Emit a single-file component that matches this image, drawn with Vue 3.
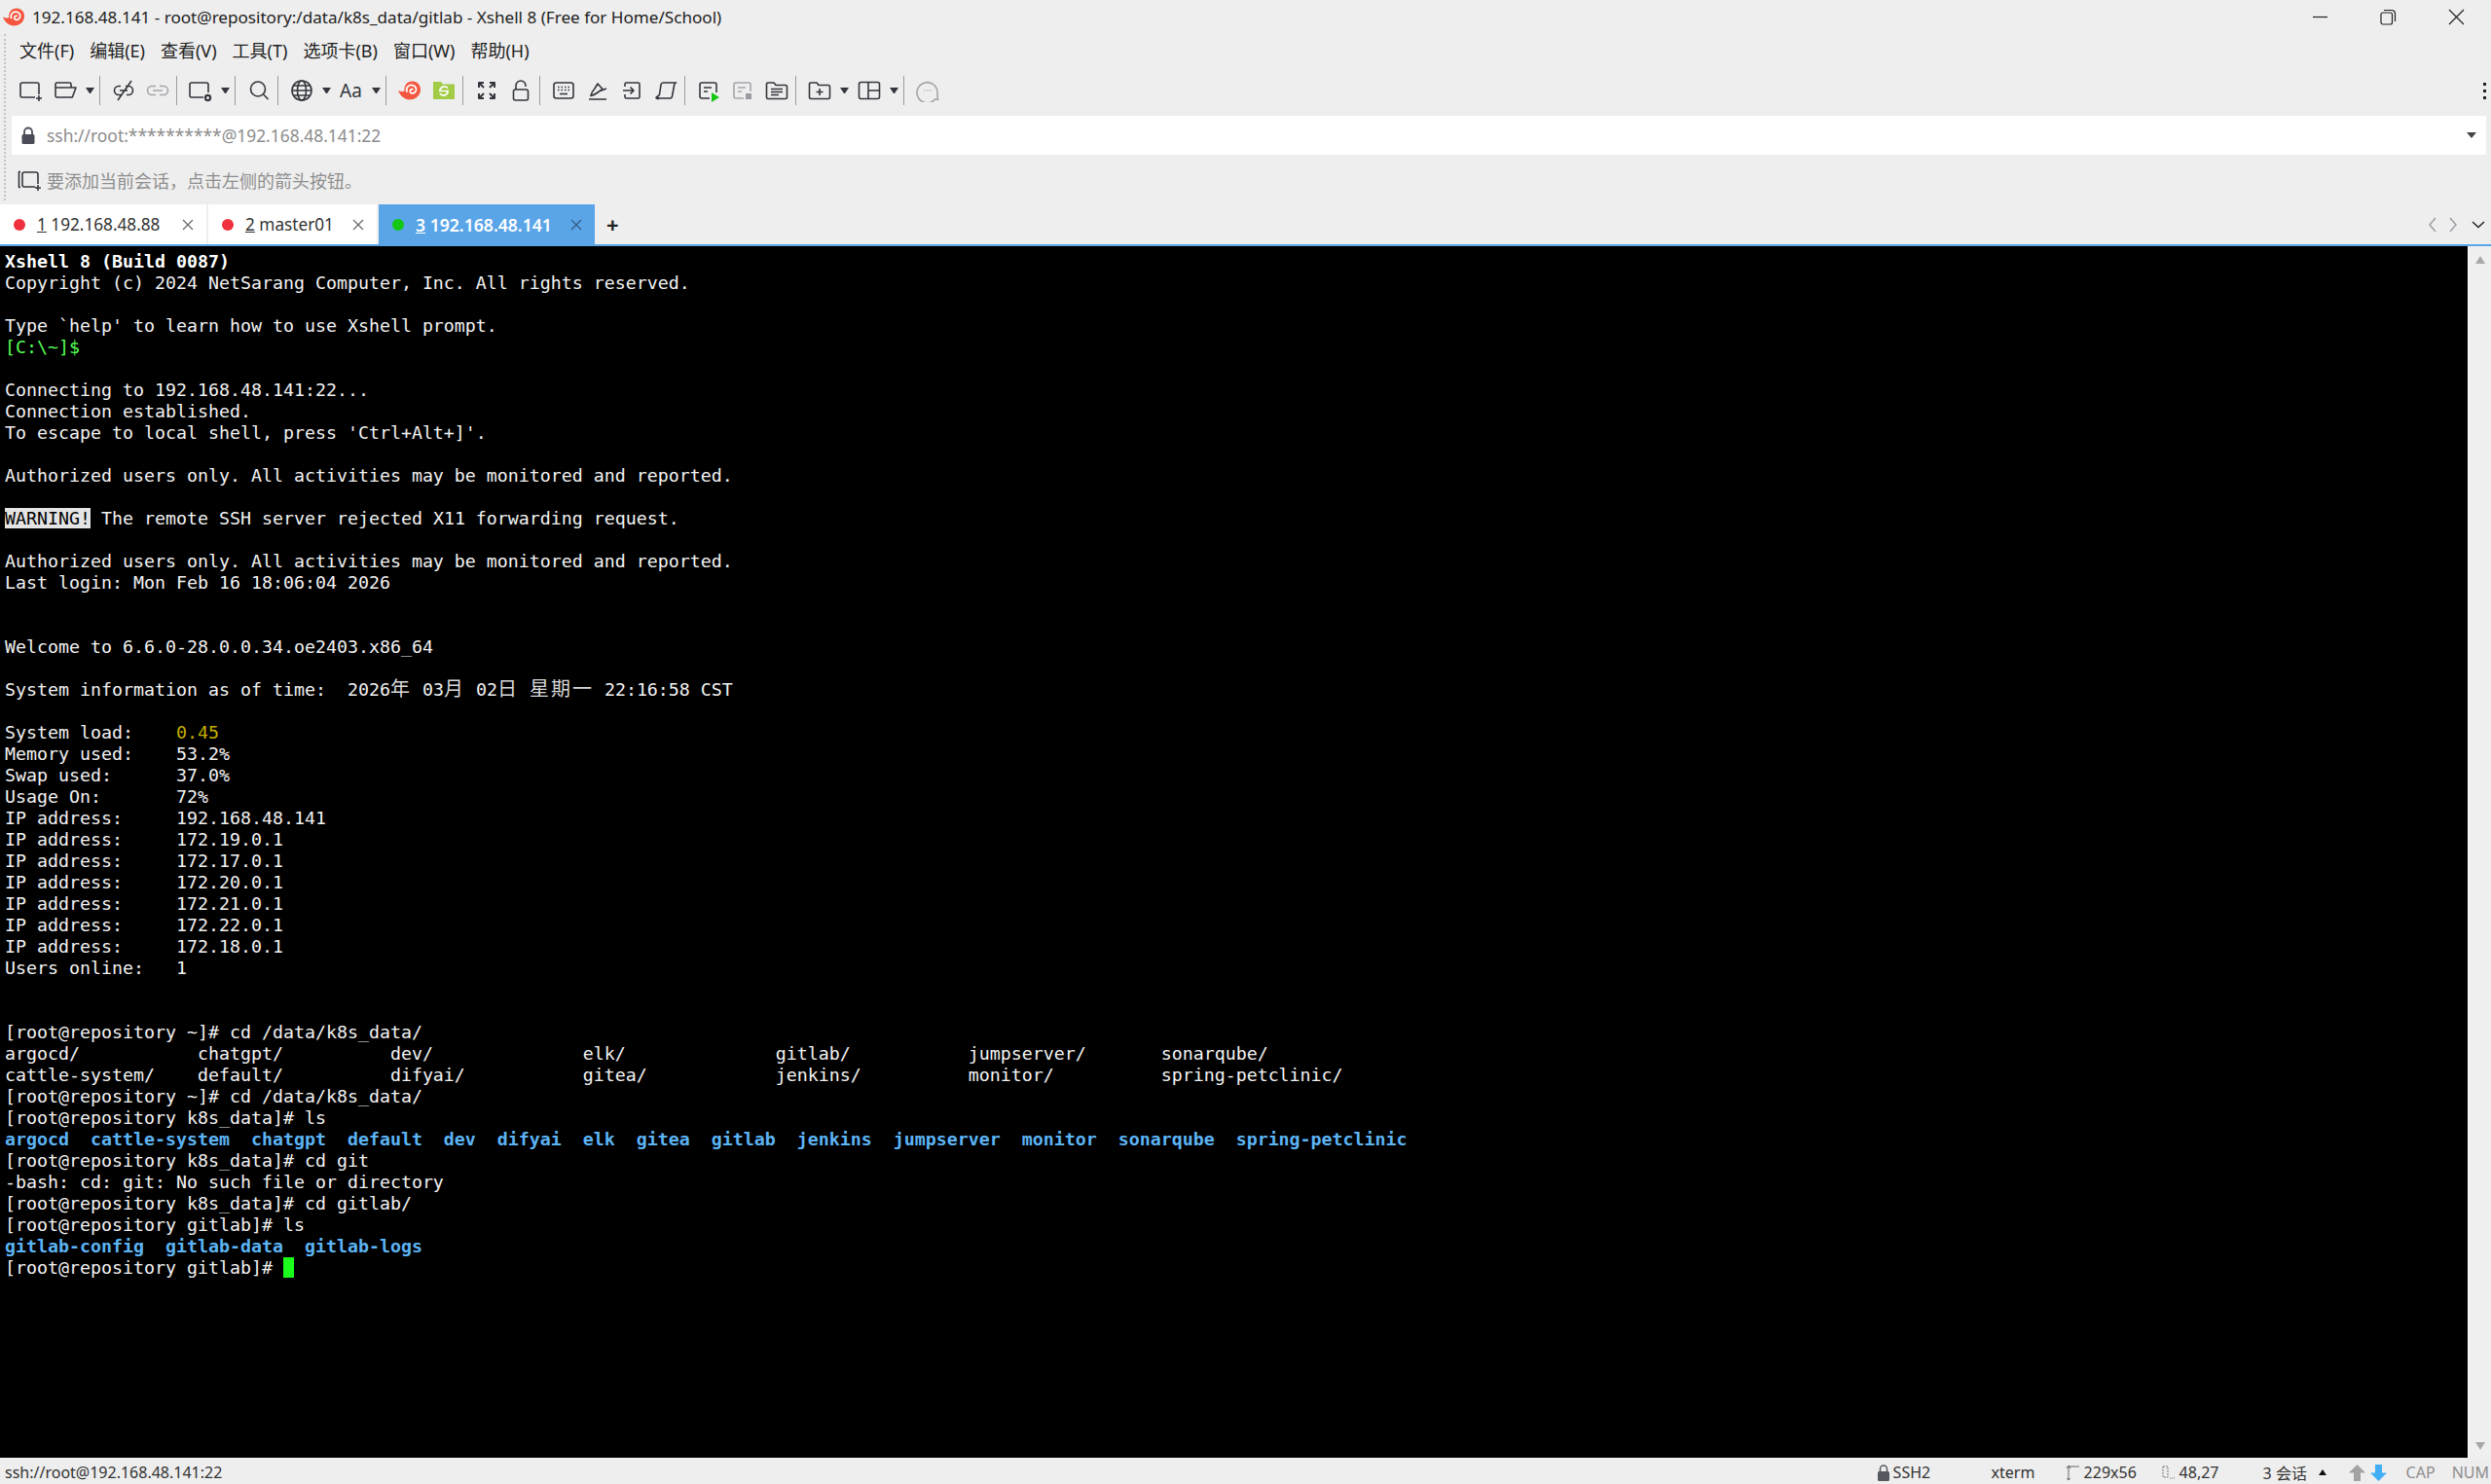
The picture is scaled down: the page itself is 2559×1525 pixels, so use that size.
<template>
  <div class="window">
    <!-- shared glyphs -->
    <svg class="defs" width="0" height="0">
      <symbol id="snail" viewBox="0 0 24 24">
        <path d="M1 11.5c2.5 1.2 4.6 1.3 6.2.4C6.6 6.5 10 2.5 15 2.5c5 0 8 3.8 8 8 0 5.8-4.800 10-10.800 10C7.300 20.500 3 16.800 1 11.500z" fill="#f4573f" />
        <path d="M9.500 12.500c-1-4 2-7.200 5.800-6.200 3 .8 4.200 3.700 3 6-1.200 2.200-4.300 2.800-5.300 1-.8-1.500.4-3.300 2.200-3" fill="none" stroke="#fff" stroke-width="1.700" stroke-linecap="round" />
      </symbol>
    </svg>

    <div class="gripper"></div>

    <header class="titlebar">
      <svg class="logo" width="24" height="24"><use href="#snail" /></svg>
      <span class="title">192.168.48.141 - root@repository:/data/k8s_data/gitlab - Xshell 8 (Free for Home/School)</span>
      <div class="win-controls">
        <svg width="17" height="17" viewBox="0 0 17 17"><path d="M1 8.500h15" stroke="#222" stroke-width="1.200" /></svg>
        <svg width="17" height="17" viewBox="0 0 17 17" fill="none" stroke="#222" stroke-width="1.200"><rect x="1" y="4" width="11.500" height="12" rx="2" /><path d="M4 1.500h8a3.500 3.500 0 0 1 3.500 3.500v8" /></svg>
        <svg width="17" height="17" viewBox="0 0 17 17"><path d="M1 1l15 15M16 1L1 16" stroke="#222" stroke-width="1.200" /></svg>
      </div>
    </header>

    <nav class="menubar">
      <span v-for="m in menus" :key="m" class="menu-item">{{ m }}</span>
    </nav>

    <div class="toolbar">
      <span class="slot"><svg class="ic" viewBox="0 0 24 24"><path d="M16 19H3a2 2 0 0 1-2-2V6a2 2 0 0 1 2-2h15a2 2 0 0 1 2 2v10" /><path d="M20 17v6M17 20h6" /></svg></span>
      <span class="slot"><svg class="ic" viewBox="0 0 24 24"><path d="M2 9h21l-3.500 9.500a1 1 0 0 1-1 .5H3.500A1.500 1.500 0 0 1 2 17.500v-12A1.500 1.500 0 0 1 3.500 4h13A1.500 1.500 0 0 1 18 5.500V9" /></svg></span>
      <span class="caret"></span>
      <span class="sep"></span>
      <span class="slot"><svg class="ic" viewBox="0 0 24 24"><path d="M9 7.500H7a4.500 4.500 0 0 0 0 9h3M14 7.500h3a4.500 4.500 0 0 1 0 9h-2M8 12h8M20 2L6 22" /></svg></span>
      <span class="slot"><svg class="ic muted" viewBox="0 0 24 24"><path d="M10 7.500H6a4.500 4.500 0 0 0 0 9h4M14 7.500h4a4.500 4.500 0 0 1 0 9h-4M7 12h10" /></svg></span>
      <span class="sep"></span>
      <span class="slot"><svg class="ic" viewBox="0 0 24 24"><path d="M15 19H3a2 2 0 0 1-2-2V6a2 2 0 0 1 2-2h15a2 2 0 0 1 2 2v8" /><circle cx="19.500" cy="19.500" r="2.600" stroke-width="2.200" /></svg></span>
      <span class="caret"></span>
      <span class="sep"></span>
      <span class="slot"><svg class="ic" viewBox="0 0 24 24"><circle cx="11" cy="10.500" r="7.500" /><path d="M16.500 16l5 5" /></svg></span>
      <span class="sep"></span>
      <span class="slot"><svg class="ic" viewBox="0 0 24 24"><circle cx="12" cy="12" r="10" /><ellipse cx="12" cy="12" rx="4.500" ry="10" /><path d="M2 12h20M3.500 7h17M3.500 17h17" /></svg></span>
      <span class="caret"></span>
      <span class="slot aa">Aa</span>
      <span class="caret"></span>
      <span class="sep"></span>
      <span class="slot"><svg width="25" height="25"><use href="#snail" /></svg></span>
      <span class="slot">
        <svg width="24" height="24" viewBox="0 0 24 24">
          <path d="M1 3h8l2 2.500h12V21H1z" fill="#a2cc45" />
          <path d="M8 12a4.500 4.500 0 0 1 8-2.300M16 13a4.500 4.500 0 0 1-8 2.300" fill="none" stroke="#fff" stroke-width="1.800" />
          <path d="M7 12.500h10" stroke="#fff" stroke-width="1.500" />
        </svg>
      </span>
      <span class="sep"></span>
      <span class="slot"><svg class="ic thick" viewBox="0 0 24 24"><path d="M4 9V4h5M4 4l5 5M20 9V4h-5M20 4l-5 5M4 15v5h5M4 20l5-5M20 15v5h-5M20 20l-5-5" /></svg></span>
      <span class="slot"><svg class="ic" viewBox="0 0 24 24"><rect x="4.500" y="11" width="15" height="11" rx="2" /><path d="M7 11V7a5 5 0 0 1 10 0v1" /></svg></span>
      <span class="sep"></span>
      <span class="slot"><svg class="ic" viewBox="0 0 24 24"><rect x="2" y="4" width="20" height="16" rx="2.500" /><path d="M6 8.500h1.500M9.500 8.500H11M13 8.500h1.500M16.500 8.500H18M6 11.500h1.500M9.500 11.500H11M13 11.500h1.500M16.500 11.500H18M8 15.500h8" /></svg></span>
      <span class="slot"><svg class="ic" viewBox="0 0 24 24"><path d="M3 21h18M5 17.500c.5-3 2-5.500 4-7.500l3-5 5 5.500-5 3.500c-2 1.500-4.500 3-7 3.500zM13 13l8-3" /></svg></span>
      <span class="slot"><svg class="ic" viewBox="0 0 24 24"><path d="M5 8V5.500A1.500 1.500 0 0 1 6.500 4h12A1.500 1.500 0 0 1 20 5.500v13a1.500 1.500 0 0 1-1.500 1.500h-12A1.500 1.500 0 0 1 5 18.500V16M3 12h11M10.500 8.500L14 12l-3.500 3.500" /></svg></span>
      <span class="slot"><svg class="ic" viewBox="0 0 24 24"><path d="M2 19.500c2-.5 3 .3 3.500.5l11 0c1 0 1.700-.7 2-2l2.200-12c.2-1 1-2 2-2H9c-1 0-1.700 1-2 2L5.500 16C5 18 2.500 18 2 19.500zM2 19.500c0 .5 1 1 3 1" /></svg></span>
      <span class="sep"></span>
      <span class="slot">
        <svg class="ic" viewBox="0 0 24 24"><path d="M13 20H5a2 2 0 0 1-2-2V6a2 2 0 0 1 2-2h13a2 2 0 0 1 2 2v8M7 9h8M7 13h4" /><path d="M15 14l8 5-8 5z" class="play" /></svg>
      </span>
      <span class="slot">
        <svg class="ic muted" viewBox="0 0 24 24"><path d="M13 20H5a2 2 0 0 1-2-2V6a2 2 0 0 1 2-2h13a2 2 0 0 1 2 2v7M7 9h8M7 13h4" /><rect x="15" y="15" width="6" height="6" class="stop" /></svg>
      </span>
      <span class="slot"><svg class="ic" viewBox="0 0 24 24"><path d="M1.500 5.500A1.500 1.500 0 0 1 3 4h6l2 2.500h10A1.500 1.500 0 0 1 22.500 8v11a1.500 1.500 0 0 1-1.500 1.500H3A1.500 1.500 0 0 1 1.500 19zM6 10.500h12M6 13.500h12M6 16.500h8" /></svg></span>
      <span class="sep"></span>
      <span class="slot"><svg class="ic" viewBox="0 0 24 24"><path d="M1.500 5.500A1.500 1.500 0 0 1 3 4h6l2 2.500h10A1.500 1.500 0 0 1 22.500 8v11a1.500 1.500 0 0 1-1.500 1.500H3A1.500 1.500 0 0 1 1.500 19zM12 10v7M8.500 13.500h7" /></svg></span>
      <span class="caret"></span>
      <span class="slot"><svg class="ic" viewBox="0 0 24 24"><rect x="1.500" y="3.500" width="21" height="17" rx="2" /><path d="M11 3.500v17M11 12h11.500" /></svg></span>
      <span class="caret"></span>
      <span class="sep"></span>
      <span class="slot"><svg class="ic muted" viewBox="0 0 24 24"><path d="M22.500 21.500l-3-.5A10.500 10.500 0 1 1 22 14c0 2 0 5 .5 7.500z" /><path d="M8.500 12h1M11.500 12h1M14.500 12h1" /></svg></span>
      <div class="more"><i></i><i></i><i></i></div>
    </div>

    <div class="addressbar">
      <svg class="addr-lock" width="14" height="18" viewBox="0 0 14 18">
        <path d="M3 9V5.500a4 4 0 0 1 8 0V9" fill="none" stroke="#4a4d55" stroke-width="1.800" />
        <rect x="0.500" y="8" width="13" height="10" rx="1.500" fill="#4a4d55" />
      </svg>
      <span class="addr-text">ssh://root:**********@192.168.48.141:22</span>
      <span class="addr-caret"></span>
    </div>

    <div class="hintbar">
      <svg class="ic hint-ic" viewBox="0 0 24 24"><path d="M3 3.500H1.500v16H3M18 19H7a2 2 0 0 1-2-2V6a2 2 0 0 1 2-2h12a2 2 0 0 1 2 2v10" /><path d="M21 17v6M18 20h6" /></svg>
      <span>要添加当前会话，点击左侧的箭头按钮。</span>
    </div>

    <div class="tabbar">
      <div v-for="tab in tabs" :key="tab.num" class="tab" :class="{ active: tab.active }" :style="{ width: tab.width + 'px' }">
        <span class="dot" :class="{ green: tab.active }"></span>
        <span class="tab-label"><u>{{ tab.num }}</u> {{ tab.label }}</span>
        <svg class="tab-close" width="12" height="12" viewBox="0 0 12 12"><path d="M1 1l10 10M11 1L1 11" /></svg>
      </div>
      <span class="tab-add">+</span>
      <div class="tab-nav">
        <svg width="10" height="16" viewBox="0 0 10 16"><path d="M8 1L2 8l6 7" stroke="#9a9aa2" /></svg>
        <svg width="10" height="16" viewBox="0 0 10 16"><path d="M2 1l6 7-6 7" stroke="#9a9aa2" /></svg>
        <svg class="tab-more" width="14" height="10" viewBox="0 0 14 10"><path d="M1 2l6 5.500L13 2" stroke="#222" /></svg>
      </div>
    </div>

    <main class="terminal-wrap">
      <div class="terminal">
        <div v-for="(row, i) in rows" :key="i" class="row">
          <span v-for="(seg, j) in row" :key="j" :class="seg.c">{{ seg.t }}</span>
        </div>
      </div>
      <div class="scrollbar">
        <span class="arrow-up"></span>
        <span class="arrow-down"></span>
      </div>
    </main>

    <footer class="statusbar">
      <span class="st-url">ssh://root@192.168.48.141:22</span>
      <span class="st-cell st-ssh">
        <svg width="12" height="17" viewBox="0 0 12 17"><path d="M2.500 8V4.500a3.500 3.500 0 0 1 7 0V8" fill="none" stroke="#55585f" stroke-width="1.500" /><rect y="7" width="12" height="10" rx="1.500" fill="#55585f" /></svg>
        SSH2
      </span>
      <span class="st-cell st-term">xterm</span>
      <span class="st-cell st-size">
        <svg width="15" height="18" viewBox="0 0 15 18" fill="none" stroke="#666"><path d="M3 3v14M3 3h11M1 5l2-3 2 3M1 15l2 2 2-2" /></svg>
        229x56
      </span>
      <span class="st-cell st-pos">
        <svg width="15" height="16" viewBox="0 0 15 16" fill="none" stroke="#777"><rect x="2" y="2" width="5" height="11" stroke-dasharray="2 1" /><path d="M9 14h5" stroke-dasharray="1 1" /></svg>
        48,27
      </span>
      <span class="st-cell st-sess">3 会话</span>
      <span class="st-up"></span>
      <svg class="st-arrow" width="17" height="17" viewBox="0 0 17 17"><path d="M8.500 0L17 8.500h-5V17H5V8.500H0z" fill="#a3a3a3" /></svg>
      <svg class="st-arrow" width="17" height="17" viewBox="0 0 17 17"><path d="M8.500 17L0 8.500h5V0h7v8.500h5z" fill="#42aef5" /></svg>
      <span class="st-cell st-key st-cap">CAP</span>
      <span class="st-cell st-key">NUM</span>
    </footer>
  </div>
</template>

<script setup>
const menus = ['文件(F)', '编辑(E)', '查看(V)', '工具(T)', '选项卡(B)', '窗口(W)', '帮助(H)']

const tabs = [
  { num: 1, label: '192.168.48.88', width: 212 },
  { num: 2, label: 'master01', width: 173 },
  { num: 3, label: '192.168.48.141', width: 222, active: true },
]

// plain strings are one white segment, everything else is [text, class] pairs
const raw = [
  [['Xshell 8 (Build 0087)', 'bold']],
  'Copyright (c) 2024 NetSarang Computer, Inc. All rights reserved.',
  '',
  "Type `help' to learn how to use Xshell prompt.",
  [['[C:\\~]$', 'green']],
  '',
  'Connecting to 192.168.48.141:22...',
  'Connection established.',
  "To escape to local shell, press 'Ctrl+Alt+]'.",
  '',
  'Authorized users only. All activities may be monitored and reported.',
  '',
  [['WARNING!', 'warn'], [' The remote SSH server rejected X11 forwarding request.', '']],
  '',
  'Authorized users only. All activities may be monitored and reported.',
  'Last login: Mon Feb 16 18:06:04 2026',
  '',
  '',
  'Welcome to 6.6.0-28.0.0.34.oe2403.x86_64',
  '',
  [
    ['System information as of time:  2026', ''],
    ['年', 'wide'],
    [' 03', ''],
    ['月', 'wide'],
    [' 02', ''],
    ['日', 'wide'],
    [' ', ''],
    ['星期一', 'wide'],
    [' 22:16:58 CST', ''],
  ],
  '',
  [['System load:    ', ''], ['0.45', 'yellow']],
  'Memory used:    53.2%',
  'Swap used:      37.0%',
  'Usage On:       72%',
  'IP address:     192.168.48.141',
  'IP address:     172.19.0.1',
  'IP address:     172.17.0.1',
  'IP address:     172.20.0.1',
  'IP address:     172.21.0.1',
  'IP address:     172.22.0.1',
  'IP address:     172.18.0.1',
  'Users online:   1',
  '',
  '',
  '[root@repository ~]# cd /data/k8s_data/',
  'argocd/           chatgpt/          dev/              elk/              gitlab/           jumpserver/       sonarqube/',
  'cattle-system/    default/          difyai/           gitea/            jenkins/          monitor/          spring-petclinic/',
  '[root@repository ~]# cd /data/k8s_data/',
  '[root@repository k8s_data]# ls',
  [['argocd  cattle-system  chatgpt  default  dev  difyai  elk  gitea  gitlab  jenkins  jumpserver  monitor  sonarqube  spring-petclinic', 'blue']],
  '[root@repository k8s_data]# cd git',
  '-bash: cd: git: No such file or directory',
  '[root@repository k8s_data]# cd gitlab/',
  '[root@repository gitlab]# ls',
  [['gitlab-config  gitlab-data  gitlab-logs', 'blue']],
  [['[root@repository gitlab]# ', ''], [' ', 'cursor']],
]

const rows = raw.map((r) =>
  typeof r === 'string' ? [{ t: r, c: '' }] : r.map(([t, c]) => ({ t, c })),
)
</script>

<style>
html,
body {
  margin: 0;
  background: #eeeeee;
}
</style>

<style scoped>
.window {
  position: relative;
  display: flex;
  flex-direction: column;
  width: 100vw;
  height: 100vh;
  overflow: hidden;
  background: #eeeeee;
  color: #222;
  font-family: "Noto Sans", "Noto Sans CJK SC", sans-serif;
  font-size: 18px;
}

.defs {
  position: absolute;
}

.gripper {
  position: absolute;
  left: 4px;
  top: 35px;
  height: 171px;
  border-left: 2px dotted #c4c4c4;
}

.titlebar {
  display: flex;
  align-items: center;
  flex: 0 0 35px;
  padding-left: 2px;
}

.logo {
  margin-right: 7px;
}

.title {
  font-size: 17.100px;
}

.win-controls {
  display: flex;
  gap: 53px;
  margin-left: auto;
  padding-right: 27px;
}

.menubar {
  display: flex;
  align-items: center;
  flex: 0 0 35px;
  box-sizing: border-box;
  gap: 16px;
  padding: 0 0 3px 20px;
}

.toolbar {
  display: flex;
  align-items: center;
  flex: 0 0 49px;
  box-sizing: border-box;
  padding: 0 0 3px 14px;
}

.slot {
  display: flex;
  align-items: center;
  justify-content: center;
  flex: 0 0 35px;
}

.ic {
  width: 24px;
  height: 24px;
  fill: none;
  stroke: #33363c;
  stroke-width: 1.600;
  stroke-linejoin: round;
}

.ic.thick {
  stroke-width: 2;
}

.ic.muted {
  stroke: #a5a6aa;
}

.ic .play {
  fill: #14c814;
  stroke: none;
}

.ic .stop {
  fill: #9a9aa0;
  stroke: none;
}

.aa {
  font-size: 19px;
  color: #33363c;
}

.caret {
  flex: 0 0 9px;
  width: 9px;
  height: 0;
  box-sizing: border-box;
  margin: 0 3.500px;
  border-top: 6px solid #33363c;
  border-left: 4.500px solid transparent;
  border-right: 4.500px solid transparent;
}

.sep {
  flex: 0 0 1px;
  height: 30px;
  margin: 0 6px 0 2px;
  background: #9c9c9c;
}

.more {
  display: flex;
  flex-direction: column;
  gap: 4px;
  margin-left: auto;
  padding-right: 5px;
}

.more i {
  display: block;
  width: 3px;
  height: 3px;
  background: #222;
}

.addressbar {
  display: flex;
  align-items: center;
  flex: 0 0 40px;
  margin: 0 5px 0 12px;
  padding: 0 10px;
  box-sizing: border-box;
  background: #fff;
}

.addr-lock {
  margin-right: 12px;
}

.addr-text {
  color: #8c8c8c;
  font-size: 17.400px;
}

.addr-caret {
  margin-left: auto;
  border-top: 6px solid #444;
  border-left: 5.500px solid transparent;
  border-right: 5.500px solid transparent;
}

.hintbar {
  display: flex;
  align-items: center;
  flex: 0 0 51px;
  padding-left: 18px;
  color: #8e8e8e;
}

.hint-ic {
  margin-right: 6px;
}

.tabbar {
  display: flex;
  align-items: stretch;
  flex: 0 0 41px;
  gap: 2px;
}

.tab {
  display: flex;
  align-items: center;
  box-sizing: border-box;
  padding: 0 13px 0 14px;
  background: #fff;
  color: #333;
  font-size: 17.200px;
}

.tab.active {
  background: #5aa5e8;
  color: #fff;
  font-size: 17.600px;
  font-weight: 600;
}

.dot {
  flex: 0 0 12px;
  height: 12px;
  margin-right: 12px;
  border-radius: 50%;
  background: #f0303c;
}

.dot.green {
  background: #12c812;
}

.tab-close {
  margin-left: auto;
  fill: none;
  stroke: #666;
  stroke-width: 1.200;
}

.active .tab-close {
  stroke: #355a80;
}

.tab-add {
  align-self: center;
  margin: 0 0 2px 10px;
  font-size: 22px;
  font-weight: 700;
}

.tab-nav {
  display: flex;
  align-items: center;
  gap: 11px;
  margin-left: auto;
  padding-right: 6px;
}

.tab-nav svg {
  fill: none;
  stroke-width: 1.400;
}

.tab-more {
  margin-left: 3px;
}

.terminal-wrap {
  display: flex;
  flex: 1;
  min-height: 0;
  border-top: 2px solid #5aa5e8;
}

.terminal {
  flex: 1;
  padding: 5px 0 0 5px;
  background: #000;
  color: #f2f2f2;
  font-family: "DejaVu Sans Mono", "Noto Sans CJK SC", monospace;
  font-size: 18.270px;
}

.row {
  height: 22px;
  line-height: 22px;
  white-space: pre;
}

.bold {
  font-weight: 700;
  color: #fff;
}

.green {
  color: #55ff55;
}

.blue {
  color: #5cb4f4;
  font-weight: 700;
}

.yellow {
  color: #c4b000;
}

.warn {
  background: #e4e4e4;
  color: #000;
}

.cursor {
  background: #1cff1c;
}

.wide {
  font-size: 20px;
  line-height: 1;
  letter-spacing: 2px;
  color: #d8d8d8;
}

.scrollbar {
  display: flex;
  flex-direction: column;
  align-items: center;
  justify-content: space-between;
  flex: 0 0 24px;
  padding: 10px 0 8px;
  box-sizing: border-box;
  border-left: 1px solid #fff;
  background: #f0f0f0;
}

.arrow-up {
  border-bottom: 8px solid #a8a8a8;
  border-left: 5.500px solid transparent;
  border-right: 5.500px solid transparent;
}

.arrow-down {
  border-top: 8px solid #a8a8a8;
  border-left: 5.500px solid transparent;
  border-right: 5.500px solid transparent;
}

.statusbar {
  display: flex;
  align-items: center;
  flex: 0 0 27px;
  box-sizing: border-box;
  padding: 3px 2px 0 5px;
  font-size: 16px;
  color: #333;
}

.st-url {
  flex: 1;
}

.st-cell {
  display: flex;
  align-items: center;
  gap: 4px;
}

.st-ssh {
  width: 117px;
}

.st-term {
  width: 76px;
}

.st-size {
  width: 98px;
}

.st-pos {
  width: 105px;
}

.st-sess {
  width: 57px;
}

.st-up {
  margin-right: 23px;
  border-bottom: 6px solid #111;
  border-left: 4px solid transparent;
  border-right: 4px solid transparent;
}

.st-arrow {
  margin-right: 5px;
}

.st-key {
  color: #8d8d8d;
}

.st-cap {
  margin: 0 17px 0 15px;
}
</style>
